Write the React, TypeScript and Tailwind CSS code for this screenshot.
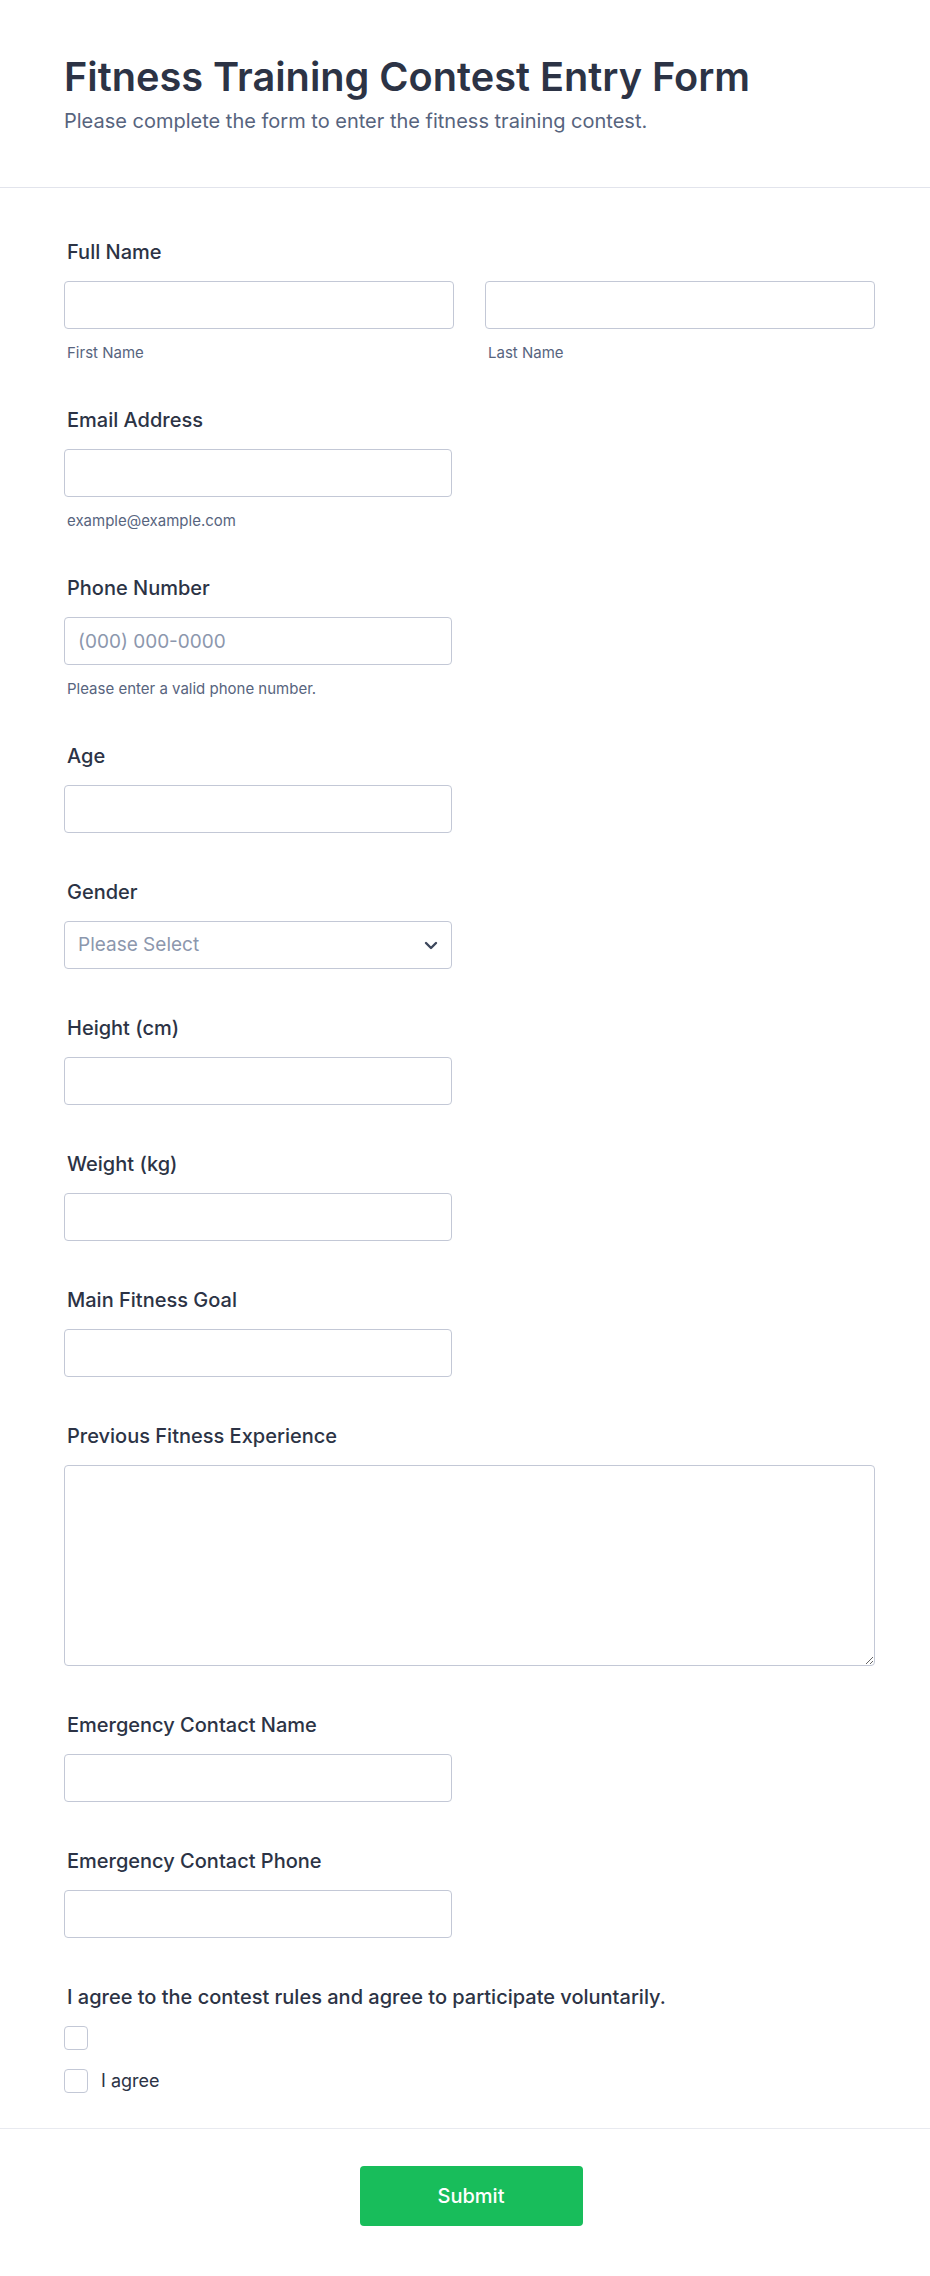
import React from "react";

const labelCls = "block pl-[3px] text-[20px] leading-[22px] font-medium text-[#2c3345] mb-[18px]";
const inputCls =
  "block h-[48px] w-full rounded-[4px] border border-[#c3c8d6] bg-white px-[13px] text-[19px] text-[#2c3345] placeholder:text-[#8c97ad] outline-none";
const helpCls = "mt-[16px] pl-[3px] text-[15px] leading-[16px] text-[#57647e]";

function Field({ label, children }: { label: string; children: React.ReactNode }) {
  return (
    <div className="flex flex-col">
      <label className={labelCls}>{label}</label>
      {children}
    </div>
  );
}

export default function App() {
  return (
    <div className="min-h-[2276px] bg-white [font-family:Inter,'Noto_Sans',sans-serif]">
      <header className="border-b border-[#e2e4ec] px-[64px] pt-[54px] pb-[55px]">
        <h1 className="text-[39.7px] leading-[46px] font-semibold text-[#2c3345]">
          Fitness Training Contest Entry Form
        </h1>
        <p className="mt-[10px] text-[20px] leading-[22px] text-[#57647e]">
          Please complete the form to enter the fitness training contest.
        </p>
      </header>

      <form className="flex w-[875px] flex-col gap-[48px] pl-[64px] pt-[53px] pb-[35px]">
        <Field label="Full Name">
          <div className="grid grid-cols-2 gap-[31px]">
            <div>
              <input className={inputCls} />
              <div className={helpCls}>First Name</div>
            </div>
            <div>
              <input className={inputCls} />
              <div className={helpCls}>Last Name</div>
            </div>
          </div>
        </Field>

        <Field label="Email Address">
          <div className="w-[388px]">
            <input className={inputCls} />
            <div className={helpCls}>example@example.com</div>
          </div>
        </Field>

        <Field label="Phone Number">
          <div className="w-[388px]">
            <input className={inputCls} placeholder="(000) 000-0000" />
            <div className={helpCls}>Please enter a valid phone number.</div>
          </div>
        </Field>

        <Field label="Age">
          <div className="w-[388px]">
            <input className={inputCls} />
          </div>
        </Field>

        <Field label="Gender">
          <div className="relative h-[48px] w-[388px] rounded-[4px] border border-[#c3c8d6] bg-white">
            <div className="flex h-full items-center px-[13px] text-[19px] text-[#8c97ad]">Please Select</div>
            <svg
              className="absolute right-[13px] top-[19px]"
              width="14"
              height="9"
              viewBox="0 0 14 9"
              fill="none"
            >
              <path d="M2 2l5 5 5-5" stroke="#3d475c" strokeWidth="2.4" strokeLinecap="round" strokeLinejoin="round" />
            </svg>
          </div>
        </Field>

        <Field label="Height (cm)">
          <div className="w-[388px]">
            <input className={inputCls} />
          </div>
        </Field>

        <Field label="Weight (kg)">
          <div className="w-[388px]">
            <input className={inputCls} />
          </div>
        </Field>

        <Field label="Main Fitness Goal">
          <div className="w-[388px]">
            <input className={inputCls} />
          </div>
        </Field>

        <Field label="Previous Fitness Experience">
          <textarea className="block h-[201px] w-full rounded-[4px] border border-[#c3c8d6] bg-white px-[13px] py-[10px] text-[19px] outline-none" />
        </Field>

        <Field label="Emergency Contact Name">
          <div className="w-[388px]">
            <input className={inputCls} />
          </div>
        </Field>

        <Field label="Emergency Contact Phone">
          <div className="w-[388px]">
            <input className={inputCls} />
          </div>
        </Field>

        <Field label="I agree to the contest rules and agree to participate voluntarily.">
          <div className="flex flex-col gap-[19px]">
            <div className="h-[24px] w-[24px] rounded-[4px] border border-[#c3c8d6] bg-white" />
            <div className="flex items-center gap-[13px]">
              <div className="h-[24px] w-[24px] rounded-[4px] border border-[#c3c8d6] bg-white" />
              <span className="text-[18px] leading-[22px] text-[#2c3345]">I agree</span>
            </div>
          </div>
        </Field>
      </form>

      <footer className="flex justify-center border-t border-[#e8eaf0] pl-[12px] pt-[37px] pb-[50px]">
        <button className="h-[60px] w-[223px] rounded-[4px] bg-[#18bd5b] text-[20px] font-medium text-white">
          Submit
        </button>
      </footer>
    </div>
  );
}
